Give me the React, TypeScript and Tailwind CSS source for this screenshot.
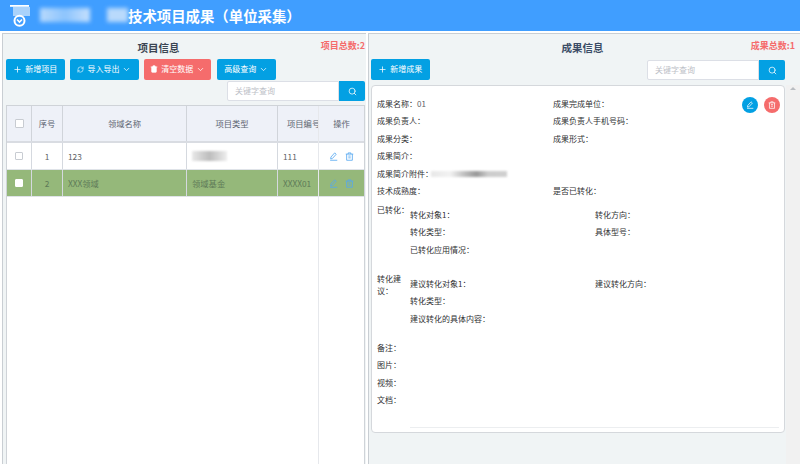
import { ChevronDown, Plus, RefreshCw, Search, Trash2 } from 'lucide-react'

const font = { fontFamily: '"Noto Sans CJK SC", "Liberation Sans", sans-serif' }

function EditIcon({ className }: { className?: string }) {
  return (
    <svg viewBox="0 0 12 12" fill="none" stroke="currentColor" strokeWidth="1.1" className={className}>
      <path d="M7.6 1.2 9.6 3 4.6 8.6 2.2 9.2 2.6 6.7Z" />
      <path d="M1.5 11H11" />
    </svg>
  )
}

function BinIcon({ className }: { className?: string }) {
  return (
    <svg viewBox="0 0 12 12" fill="none" stroke="currentColor" strokeWidth="1.1" className={className}>
      <path d="M1 2.8H11M4.2 2.8V1.2H7.8V2.8M2.2 2.8V11H9.8V2.8M4.4 5.4H7.6M4.4 7.8H7.6" />
    </svg>
  )
}

function Logo() {
  return (
    <svg viewBox="0 0 20 24" className="w-[20px] h-[24px] mt-[4px]" fill="none">
      <path d="M3 3H20V12H3Z" fill="#a9d2fb" />
      <path d="M0 1H19V2.8H0Z" fill="#fff" />
      <circle cx="9.5" cy="16.8" r="5" stroke="#fff" strokeWidth="2" />
      <path d="M7 15.5 9.5 18 12 15.5" stroke="#fff" strokeWidth="1.6" />
    </svg>
  )
}

function Btn({ children, w, red }: { children: React.ReactNode; w: string; red?: boolean }) {
  return (
    <button className={`${w} h-[20.5px] rounded-[2px] text-white text-[8px] flex items-center justify-center gap-[3px] ${red ? 'bg-[#f56c6c]' : 'bg-[#03a0e3]'}`}>
      {children}
    </button>
  )
}

function SearchBox({ className }: { className?: string }) {
  return (
    <div className={`flex w-[138px] h-[20px] ${className ?? ''}`}>
      <div className="flex-1 bg-white border border-[#dcdfe6] rounded-l-[2px] pl-[7px] text-[8px] text-[#bcc0c7] flex items-center">关键字查询</div>
      <div className="w-[26px] bg-[#03a0e3] rounded-r-[2px] flex items-center justify-center text-white">
        <Search size={9} />
      </div>
    </div>
  )
}

const cols = 'grid grid-cols-[25px_31px_124px_91px_41px]'

function Row({ n, name, type, code, green }: { n: string; name: string; type?: string; code: string; green?: boolean }) {
  return (
    <div className={`${cols} h-[27px] border-b border-[#dfe3e8] text-[8.3px] ${green ? 'bg-[#95b87a] text-[#5e7a58]' : 'bg-white text-[#606266]'}`}>
      <div className="border-r border-[#d5d9df] flex items-center justify-center">
        <span className={`w-[8px] h-[8px] rounded-[1px] border ${green ? 'bg-white border-white' : 'bg-white border-[#c8ccd2]'}`} />
      </div>
      <div className="border-r border-[#d5d9df] flex items-center justify-center">{n}</div>
      <div className="border-r border-[#d5d9df] flex items-center pl-[5px]">{name}</div>
      <div className="border-r border-[#d5d9df] flex items-center pl-[5px]">
        {type ?? <span className="w-[35px] h-[10px] -mt-[1px] bg-gradient-to-r from-[#e8e8e8] via-[#bdbdbd] to-[#eeeeee] blur-[1px]" />}
      </div>
      <div className="flex items-center pl-[5px] whitespace-nowrap">{code}</div>
    </div>
  )
}

function Field({ label, value, className }: { label: string; value?: string; className?: string }) {
  return (
    <div className={`h-[17.4px] text-[8px] text-[#303133] flex items-center ${className ?? ''}`}>
      {label}：<span className="text-[#606266]">{value}</span>
    </div>
  )
}

export default function App() {
  return (
    <div className="w-[800px] h-[464px] overflow-hidden bg-white flex flex-col" style={font}>
      <header className="h-[31px] bg-[#409eff] flex items-start pl-[10px] shrink-0">
        <Logo />
        <div className="ml-[10px] mt-[8px] w-[50px] h-[14px] bg-gradient-to-r from-[#b9dafc] via-[#8cc4fd] to-[#c6e0fc] blur-[2px]" />
        <div className="ml-[17px] mt-[8px] w-[21px] h-[14px] bg-[#b9dafc] blur-[2px]" />
        <h1 className="text-[14.4px] leading-[31px] font-semibold text-white">技术项目成果（单位采集）</h1>
      </header>
      <main className="flex-1 flex gap-[2px] min-h-0 bg-white pt-[2px]">
        <section className="w-[364px] ml-[2px] bg-[#f0f4f5] border-l border-t border-[#c9ced3] flex flex-col relative overflow-hidden">
          <h2 className="text-center text-[10.5px] font-semibold text-[#3b4553] mt-[4.5px] h-[17px] leading-[17px] pr-[52px]">项目信息</h2>
          <span className="absolute right-[1px] top-[5px] text-[9px] font-semibold text-[#f56c6c]">项目总数:2</span>
          <div className="flex gap-[5.7px] pl-[3px] mt-[3.5px]">
            <Btn w="w-[58.6px]"><Plus size={9} />新增项目</Btn>
            <Btn w="w-[68.3px]"><RefreshCw size={7} />导入导出<ChevronDown size={9} /></Btn>
            <Btn w="w-[67px]" red><Trash2 size={8} fill="#fff" />清空数据<ChevronDown size={9} /></Btn>
            <Btn w="w-[58.7px]">高级查询<ChevronDown size={9} /></Btn>
          </div>
          <div className="flex justify-end pr-[1px] mt-[1.5px]">
            <SearchBox />
          </div>
          <div className="ml-[3px] mr-[1px] mt-[4px] -mb-[4px] flex-1 bg-white border border-[#cfd3d8] relative overflow-hidden">
            <div className="w-[312px] overflow-hidden">
              <div className={`${cols} w-[312px] h-[37px] bg-[#eef1f8] border-b-2 border-[#d9dce2] text-[8.3px] text-[#5c6470] text-center`}>
                <div className="border-r border-[#d0d4da] flex items-center justify-center">
                  <span className="w-[9px] h-[9px] bg-white border border-[#c8ccd2] rounded-[1px]" />
                </div>
                <div className="border-r border-[#d0d4da] flex items-center justify-center">序号</div>
                <div className="border-r border-[#d0d4da] flex items-center justify-center">领域名称</div>
                <div className="border-r border-[#d0d4da] flex items-center justify-center">项目类型</div>
                <div className="flex items-center pl-[9px] whitespace-nowrap">项目编号</div>
              </div>
              <Row n="1" name="123" code="111" />
              <Row n="2" name="XXX领域" type="领域基金" code="XXXX01" green />
            </div>
            <div className="absolute right-0 top-0 bottom-0 w-[46px] border-l border-[#e6e8ec] text-[8.3px]">
              <div className="h-[37px] bg-[#eef1f8] border-b-2 border-[#d9dce2] text-[#5c6470] flex items-center justify-center">操作</div>
              <div className="h-[27px] bg-white border-b border-[#dfe3e8] flex items-center justify-center gap-[7px] text-[#55a7f0]">
                <EditIcon className="w-[9px] h-[9px]" />
                <BinIcon className="w-[9px] h-[9px]" />
              </div>
              <div className="h-[27px] bg-[#95b87a] border-b border-[#dfe3e8] flex items-center justify-center gap-[7px] text-[#55a7f0]">
                <EditIcon className="w-[9px] h-[9px]" />
                <BinIcon className="w-[9px] h-[9px]" />
              </div>
            </div>
          </div>
        </section>
        <section className="flex-1 bg-[#f0f4f5] border-l border-t border-[#c9ced3] flex flex-col relative">
          <h2 className="text-center text-[10.5px] font-semibold text-[#3b4c66] mt-[4.5px] h-[17px] leading-[17px] pr-[4px]">成果信息</h2>
          <span className="absolute right-[5px] top-[5px] text-[9px] font-semibold text-[#f56c6c]">成果总数:1</span>
          <div className="flex items-start justify-between pl-[2px] pr-[15px] mt-[3.5px] h-[21px]">
            <Btn w="w-[58.6px]"><Plus size={9} />新增成果</Btn>
            <SearchBox className="mt-[1px]" />
          </div>
          <div className="ml-[2px] mr-[15px] mt-[5px] h-[348px] bg-white border border-[#d5d8dc] rounded-[4px] px-[5px] pt-[9.25px] relative z-10">
            <div className="grid grid-cols-[176px_1fr]">
              <Field label="成果名称" value="01" />
              <Field label="成果完成单位" />
              <Field label="成果负责人" />
              <Field label="成果负责人手机号码" />
              <Field label="成果分类" />
              <Field label="成果形式" />
              <Field label="成果简介" className="col-span-2" />
              <div className="col-span-2 flex items-center">
                <Field label="成果简介附件" />
                <span className="-ml-[2px] w-[76px] h-[6px] bg-[linear-gradient(90deg,#e8e8e8_0%,#f2f2f2_25%,#bcbcbc_45%,#999999_60%,#cccccc_75%,#d0d0d0_100%)] blur-[1px]" />
              </div>
              <Field label="技术成熟度" />
              <Field label="是否已转化" />
            </div>
            <div className="flex mt-[1px]">
              <div className="w-[33px] text-[8px] leading-[17px] text-[#303133]">已转化：</div>
              <div className="flex-1 grid grid-cols-[185px_1fr] mt-[5.5px]">
                <Field label="转化对象1" />
                <Field label="转化方向" />
                <Field label="转化类型" />
                <Field label="具体型号" />
                <Field label="已转化应用情况" className="col-span-2" />
              </div>
            </div>
            <div className="flex mt-[14px]">
              <div className="w-[33px] pr-[6px] text-[8px] leading-[12px] text-[#303133] pt-[0.5px]">转化建议：</div>
              <div className="flex-1 grid grid-cols-[185px_1fr] mt-[3px]">
                <Field label="建议转化对象1" />
                <Field label="建议转化方向" />
                <Field label="转化类型" className="col-span-2" />
                <Field label="建议转化的具体内容" className="col-span-2" />
              </div>
            </div>
            <div className="mt-[11.8px]">
              <Field label="备注" />
              <Field label="图片" />
              <Field label="视频" />
              <Field label="文档" />
            </div>
            <div className="ml-[33px] mt-[18px] border-t border-[#eceef0]" />
            <div className="absolute right-[4px] top-[11px] flex gap-[6px]">
              <span className="w-[16px] h-[16px] rounded-full bg-[#03a0e3] text-white flex items-center justify-center">
                <EditIcon className="w-[8px] h-[8px]" />
              </span>
              <span className="w-[16px] h-[16px] rounded-full bg-[#f56c6c] text-white flex items-center justify-center">
                <BinIcon className="w-[8px] h-[8px]" />
              </span>
            </div>
          </div>
          <div className="absolute right-0 top-[51px] bottom-0 w-[14px] bg-[#f1f1f1] flex justify-center pt-[2px]">
            <span className="w-0 h-0 border-x-[3px] border-x-transparent border-b-[3px] border-b-[#b9bdc2]" />
          </div>
        </section>
      </main>
    </div>
  )
}
